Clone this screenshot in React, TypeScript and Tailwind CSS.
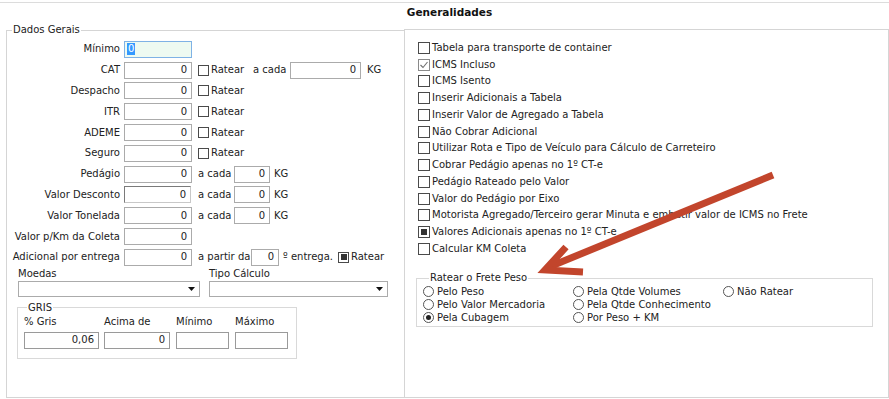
import React from "react";

type CbState = "none" | "check" | "fill";

function Cb({ state = "none", size = 11 }: { state?: CbState; size?: number }) {
  const sz = size === 12 ? "w-[12px] h-[12px]" : "w-[11px] h-[11px]";
  const border = state === "check" ? "border-[#8a8a8a]" : "border-[#4a4a4a]";
  return (
    <span className={`relative inline-flex ${sz} shrink-0 items-center justify-center border ${border} bg-white`}>
      {state === "check" && (
        <svg width="10" height="10" viewBox="0 0 10 10" className="block">
          <path d="M1.5 5 L4 7.5 L8.5 2" fill="none" stroke="#707070" strokeWidth="1.1" />
        </svg>
      )}
      {state === "fill" && <span className="block w-[6px] h-[6px] bg-[#333]" />}
    </span>
  );
}

function Radio({ on = false }: { on?: boolean }) {
  return (
    <span className="inline-flex w-[11px] h-[11px] shrink-0 items-center justify-center rounded-full border border-[#555] bg-white">
      {on && <span className="block w-[5px] h-[5px] rounded-full bg-[#222]" />}
    </span>
  );
}

function Inp({ w, val = "", sunken = false }: { w: string; val?: string; sunken?: boolean }) {
  const b = sunken
    ? "border border-t-[#7a7a7a] border-l-[#7a7a7a] border-r-[#c8c8c8] border-b-[#c8c8c8]"
    : "border border-[#ababab]";
  return (
    <div className={`${w} h-[17px] ${b} bg-white flex items-center justify-end pr-[4px] shrink-0 leading-none`}>
      {val}
    </div>
  );
}

function Row({ label, children }: { label: string; children: React.ReactNode }) {
  return (
    <div className="flex h-[20.8px] items-center">
      <span className="w-[113px] text-right shrink-0 whitespace-nowrap">{label}</span>
      <div className="ml-[4px] flex items-center">{children}</div>
    </div>
  );
}

function RatearBox({ state = "none" }: { state?: CbState }) {
  return (
    <span className="flex items-center">
      <Cb state={state} />
      <span className="ml-[2px]">Ratear</span>
    </span>
  );
}

function Select({ w }: { w: string }) {
  return (
    <div className={`${w} h-[16px] border border-[#ababab] bg-white flex items-center justify-end pr-[4px]`}>
      <svg width="7" height="4" viewBox="0 0 7 4">
        <path d="M0 0 H7 L3.5 4 Z" fill="#111" />
      </svg>
    </div>
  );
}

const rightChecks: { t: string; s: CbState }[] = [
  { t: "Tabela para transporte de container", s: "none" },
  { t: "ICMS Incluso", s: "check" },
  { t: "ICMS Isento", s: "none" },
  { t: "Inserir Adicionais a Tabela", s: "none" },
  { t: "Inserir Valor de Agregado a Tabela", s: "none" },
  { t: "Não Cobrar Adicional", s: "none" },
  { t: "Utilizar Rota e Tipo de Veículo para Cálculo de Carreteiro", s: "none" },
  { t: "Cobrar Pedágio apenas no 1º CT-e", s: "none" },
  { t: "Pedágio Rateado pelo Valor", s: "none" },
  { t: "Valor do Pedágio por Eixo", s: "none" },
  { t: "Motorista Agregado/Terceiro gerar Minuta e embutir valor de ICMS no Frete", s: "none" },
  { t: "Valores Adicionais apenas no 1º CT-e", s: "fill" },
  { t: "Calcular KM Coleta", s: "none" },
];

export default function App() {
  return (
    <div className="relative w-[889px] h-[399px] overflow-hidden bg-white text-[10px] leading-[12px] text-[#222] font-['DejaVu_Sans',sans-serif]">
      {/* title */}
      <div className="mt-[2px] border-t border-[#dcdcdc] h-[22px] flex justify-center pl-[10px] pt-[3px]">
        <span className="font-bold text-[10.5px] leading-[13px] text-[#111]">Generalidades</span>
      </div>

      <div className="flex items-start">
        {/* left */}
        <fieldset className="ml-[6px] w-[398px] h-[374px] border border-r-0 border-[#d5d5d5]">
          <legend className="ml-[5px] px-[1px] leading-[12px]">Dados Gerais</legend>
          <div className="pt-[3px]">
            <Row label="Mínimo">
              <div className="w-[68px] h-[17px] border border-[#7fb2e5] bg-[#eefaf1] flex items-center pl-[2px]">
                <span className="bg-[#3399ff] text-white px-[1px] leading-[12px]">0</span>
              </div>
            </Row>
            <Row label="CAT">
              <Inp w="w-[68px]" val="0" />
              <span className="ml-[6px] w-[55px] flex"><RatearBox /></span>
              <span className="w-[37px]">a cada</span>
              <Inp w="w-[71px]" val="0" />
              <span className="ml-[6px]">KG</span>
            </Row>
            <Row label="Despacho">
              <Inp w="w-[68px]" val="0" />
              <span className="ml-[6px]"><RatearBox /></span>
            </Row>
            <Row label="ITR">
              <Inp w="w-[68px]" val="0" />
              <span className="ml-[6px]"><RatearBox /></span>
            </Row>
            <Row label="ADEME">
              <Inp w="w-[68px]" val="0" />
              <span className="ml-[6px]"><RatearBox /></span>
            </Row>
            <Row label="Seguro">
              <Inp w="w-[68px]" val="0" />
              <span className="ml-[6px]"><RatearBox /></span>
            </Row>
            <Row label="Pedágio">
              <Inp w="w-[68px]" val="0" />
              <span className="ml-[6px] w-[36px]">a cada</span>
              <Inp w="w-[36px]" val="0" />
              <span className="ml-[4px]">KG</span>
            </Row>
            <Row label="Valor Desconto">
              <Inp w="w-[67px]" val="0" sunken />
              <span className="ml-[7px] w-[36px]">a cada</span>
              <Inp w="w-[36px]" val="0" />
              <span className="ml-[4px]">KG</span>
            </Row>
            <Row label="Valor Tonelada">
              <Inp w="w-[68px]" val="0" />
              <span className="ml-[6px] w-[36px]">a cada</span>
              <Inp w="w-[36px]" val="0" />
              <span className="ml-[4px]">KG</span>
            </Row>
            <Row label="Valor p/Km da Coleta">
              <Inp w="w-[68px]" val="0" />
            </Row>
            <Row label="Adicional por entrega">
              <Inp w="w-[68px]" val="0" />
              <span className="ml-[6px] w-[53px] whitespace-nowrap">a partir da</span>
              <Inp w="w-[28px]" val="0" />
              <span className="ml-[4px] w-[55px] whitespace-nowrap">º entrega.</span>
              <RatearBox state="fill" />
            </Row>

            {/* Moedas / Tipo Calculo */}
            <div className="flex h-[12px] pl-[11px]">
              <span className="w-[191px]">Moedas</span>
              <span>Tipo Cálculo</span>
            </div>
            <div className="flex mt-[1px] pl-[11px] gap-[9px]">
              <Select w="w-[182px]" />
              <Select w="w-[179px]" />
            </div>

            {/* GRIS */}
            <fieldset className="ml-[10px] mt-[5px] w-[280px] border border-[#d9d9d9] pl-[6px] pb-[9px]">
              <legend className="ml-[3px] px-[1px] leading-[12px]">GRIS</legend>
              <div className="flex pt-[2px] h-[14px]">
                <span className="w-[80px]">% Gris</span>
                <span className="w-[72px]">Acima de</span>
                <span className="w-[59px]">Mínimo</span>
                <span>Máximo</span>
              </div>
              <div className="flex mt-[4px]">
                <div className="w-[75px] h-[17px] border border-[#9a9a9a] flex items-center justify-end pr-[4px]">0,06</div>
                <div className="ml-[5px] w-[66px] h-[17px] border border-[#9a9a9a] flex items-center justify-end pr-[4px]">0</div>
                <div className="ml-[6px] w-[53px] h-[17px] border border-[#9a9a9a]" />
                <div className="ml-[6px] w-[53px] h-[17px] border border-[#9a9a9a]" />
              </div>
            </fieldset>
          </div>
        </fieldset>

        {/* right */}
        <div className="mt-[5px] flex-1 h-[369px] border border-[#d5d5d5]">
          <div className="pl-[13px] pt-[9.6px]">
            {rightChecks.map((c) => (
              <div key={c.t} className="flex h-[16.75px] items-center whitespace-nowrap">
                <Cb state={c.s} size={12} />
                <span className="ml-[2px]">{c.t}</span>
              </div>
            ))}
          </div>
          <fieldset className="ml-[11px] mt-[15px] w-[457px] border border-[#d9d9d9] pl-[6px] pb-[2px]">
            <legend className="ml-[6px] px-[1px] leading-[12px]">Ratear o Frete Peso</legend>
            <div className="grid grid-cols-[150px_150px_1fr] pt-[1px]">
              <div className="flex h-[13px] items-center"><Radio /><span className="ml-[3px]">Pelo Peso</span></div>
              <div className="flex h-[13px] items-center"><Radio /><span className="ml-[3px]">Pela Qtde Volumes</span></div>
              <div className="flex h-[13px] items-center"><Radio /><span className="ml-[3px]">Não Ratear</span></div>
              <div className="flex h-[13px] items-center"><Radio /><span className="ml-[3px]">Pelo Valor Mercadoria</span></div>
              <div className="flex h-[13px] items-center"><Radio /><span className="ml-[3px]">Pela Qtde Conhecimento</span></div>
              <div />
              <div className="flex h-[13px] items-center"><Radio on /><span className="ml-[3px]">Pela Cubagem</span></div>
              <div className="flex h-[13px] items-center"><Radio /><span className="ml-[3px]">Por Peso + KM</span></div>
              <div />
            </div>
          </fieldset>
        </div>
      </div>

      {/* annotation arrow */}
      <svg className="absolute inset-0 pointer-events-none" width="889" height="399" viewBox="0 0 889 399">
        <g stroke="#c2452c" strokeWidth="7" fill="none" strokeLinecap="butt" strokeLinejoin="miter">
          <path d="M773 175 L549 267" />
          <path d="M566 247 L545 270 L583 272" />
        </g>
      </svg>
    </div>
  );
}
